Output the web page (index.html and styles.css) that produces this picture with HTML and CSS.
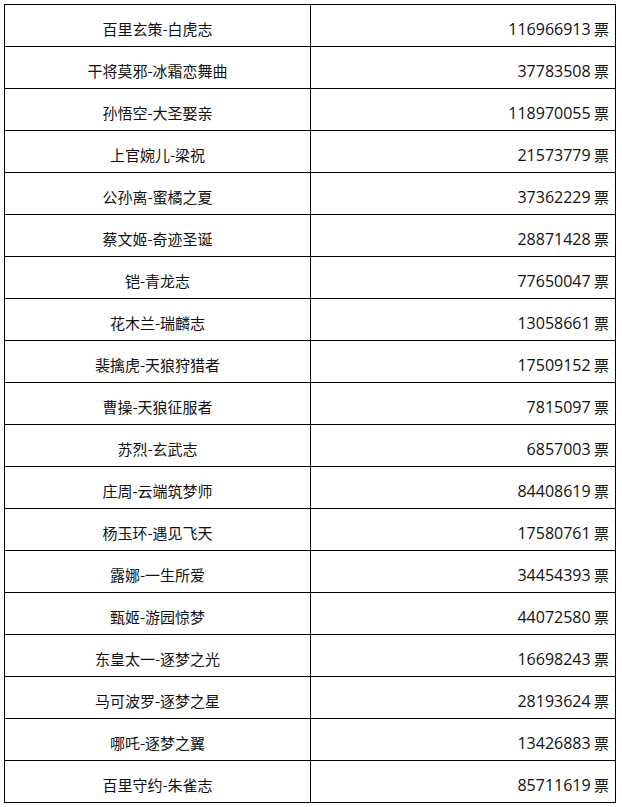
FILE: index.html
```html
<!DOCTYPE html>
<html lang="zh">
<head>
<meta charset="utf-8">
<link rel="stylesheet" href="styles.css">
</head>
<body>
<table class="votes">
<tbody>
<tr><td class="name">百里玄策-白虎志</td><td class="num"><span class="count">116966913</span> 票</td></tr>
<tr><td class="name">干将莫邪-冰霜恋舞曲</td><td class="num"><span class="count">37783508</span> 票</td></tr>
<tr><td class="name">孙悟空-大圣娶亲</td><td class="num"><span class="count">118970055</span> 票</td></tr>
<tr><td class="name">上官婉儿-梁祝</td><td class="num"><span class="count">21573779</span> 票</td></tr>
<tr><td class="name">公孙离-蜜橘之夏</td><td class="num"><span class="count">37362229</span> 票</td></tr>
<tr><td class="name">蔡文姬-奇迹圣诞</td><td class="num"><span class="count">28871428</span> 票</td></tr>
<tr><td class="name">铠-青龙志</td><td class="num"><span class="count">77650047</span> 票</td></tr>
<tr><td class="name">花木兰-瑞麟志</td><td class="num"><span class="count">13058661</span> 票</td></tr>
<tr><td class="name">裴擒虎-天狼狩猎者</td><td class="num"><span class="count">17509152</span> 票</td></tr>
<tr><td class="name">曹操-天狼征服者</td><td class="num"><span class="count">7815097</span> 票</td></tr>
<tr><td class="name">苏烈-玄武志</td><td class="num"><span class="count">6857003</span> 票</td></tr>
<tr><td class="name">庄周-云端筑梦师</td><td class="num"><span class="count">84408619</span> 票</td></tr>
<tr><td class="name">杨玉环-遇见飞天</td><td class="num"><span class="count">17580761</span> 票</td></tr>
<tr><td class="name">露娜-一生所爱</td><td class="num"><span class="count">34454393</span> 票</td></tr>
<tr><td class="name">甄姬-游园惊梦</td><td class="num"><span class="count">44072580</span> 票</td></tr>
<tr><td class="name">东皇太一-逐梦之光</td><td class="num"><span class="count">16698243</span> 票</td></tr>
<tr><td class="name">马可波罗-逐梦之星</td><td class="num"><span class="count">28193624</span> 票</td></tr>
<tr><td class="name">哪吒-逐梦之翼</td><td class="num"><span class="count">13426883</span> 票</td></tr>
<tr><td class="name">百里守约-朱雀志</td><td class="num"><span class="count">85711619</span> 票</td></tr>
</tbody>
</table>
</body>
</html>
```
FILE: styles.css
```css
html, body {
  margin: 0;
  padding: 0;
  background: #fff;
}
body {
  padding: 4px 0 0 4px;
  font-family: "Noto Sans CJK SC", "Noto Sans", sans-serif;
  font-size: 15px;
  color: #111;
}
.votes {
  border-collapse: collapse;
  table-layout: fixed;
  width: 612px;
}
.votes td {
  border: 1px solid #000;
  height: 42px;
  box-sizing: border-box;
  padding: 6px 6px 0 6px;
  line-height: 20px;
  vertical-align: middle;
  white-space: nowrap;
}
.votes .name {
  width: 306px;
  text-align: center;
}
.votes .num {
  text-align: right;
}
.votes .count {
  font-family: "Open Sans", "Noto Sans", sans-serif;
  font-size: 16px;
  line-height: 1;
}
```
